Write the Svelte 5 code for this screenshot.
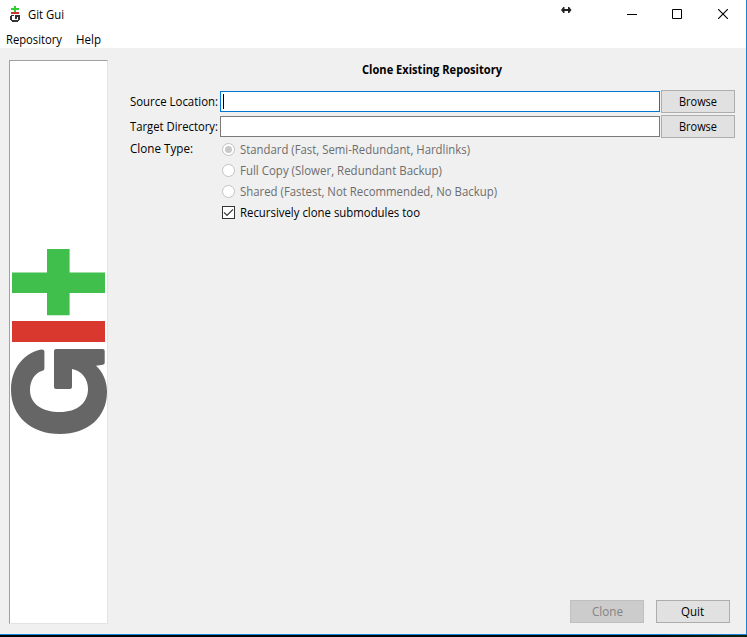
<script>
  let source = $state('');
  let target = $state('');
  let recursive = $state(true);
  const types = [
    { label: 'Standard (Fast, Semi-Redundant, Hardlinks)', on: true, width: 230 },
    { label: 'Full Copy (Slower, Redundant Backup)', on: false, width: 202 },
    { label: 'Shared (Fastest, Not Recommended, No Backup)', on: false, width: 257 }
  ];
</script>

{#snippet label(text, width, bold = false, color = '#000')}
  <svg class="label" class:bold style="width: {width}px" height="18" role="img" aria-label={text}>
    <text x="0" y="13" textLength={width} lengthAdjust="spacingAndGlyphs" fill={color}>{text}</text>
  </svg>
{/snippet}

<div class="desktop">
  <div class="window">
    <header>
      <svg class="app-icon" width="10" height="17" viewBox="0 0 10 17" shape-rendering="crispEdges">
        <path fill="#32cd32" d="M4 0h2v2h3v2H6v2H4V4H1V2h3z" />
        <path fill="#cc3333" d="M1 6h8v2H1z" />
        <path fill="#333" d="M1 9h3v1H2v4h6v-3H7v2H5V9h5v5H9v1H8v1H2v-1H1v-1H0v-4h1z" />
      </svg>
      {@render label('Git Gui', 36)}
      <div class="controls">
        <svg width="11" height="6" viewBox="0 0 11 6" class="resize">
          <path fill="#222" d="M0 3 2 .5V0h1.500v2h3.500V0h1.500v.5l2 2.500-2 2.500V6H7V4H3.500v2H2v-.5z" />
        </svg>
        <svg width="10" height="10" class="min"><path d="M0 5.5h10" stroke="#000" /></svg>
        <svg width="10" height="10" class="max"><path d="M.5.5h9v9h-9z" fill="none" stroke="#000" /></svg>
        <svg width="10" height="10" class="close"><path d="m0 0 10 10M10 0 0 10" stroke="#000" stroke-width="1.1" /></svg>
      </div>
    </header>
    <nav>
      {@render label('Repository', 56)}
      {@render label('Help', 25)}
    </nav>
    <main>
      <aside>
        <svg width="97" height="187" viewBox="10 248 97 187">
          <path fill="#40bf4d" d="M47 249h22.6v23.5H105V293H69.600v22.200H47V293H12v-20.500h35z" />
          <path fill="#d9382f" d="M12 321h93v21H12z" />
          <path
            fill="#666"
            d="M41 349.500C25 353 11 367 11 390c0 26 20 44 49 44 28 0 47-17 47-42 0-11-4-20-11-26.300l7-1q1.700-.3 1.700-2V351q0-2-2-2H56q-2 0-2 2v36q0 2 2 2h14q2 0 2-2v-18c10 2 16 10 16 20 0 14-11 23-28 23-18 0-30-8-30-22 0-10 5-17 12.500-19.300q1.900-.5 1.900-2.200V351.500q0-2.200-3.400-2z"
          />
        </svg>
      </aside>
      <section>
        <h1>{@render label('Clone Existing Repository', 140, true)}</h1>
        <form onsubmit={(e) => e.preventDefault()}>
          <div class="row">
            <div class="name">{@render label('Source Location:', 88)}</div>
            <div class="field focused">
              <span class="caret"></span>
              <input aria-label="Source Location" bind:value={source} />
            </div>
            <button type="button">{@render label('Browse', 38)}</button>
          </div>
          <div class="row">
            <div class="name">{@render label('Target Directory:', 88)}</div>
            <div class="field"><input aria-label="Target Directory" bind:value={target} /></div>
            <button type="button">{@render label('Browse', 38)}</button>
          </div>
          <div class="type">
            <div class="name">{@render label('Clone Type:', 63)}</div>
            <div class="options">
              {#each types as t}
                <div class="option">
                  <span class="radio" class:on={t.on}></span>
                  {@render label(t.label, t.width, false, '#6d6d6d')}
                </div>
              {/each}
              <div class="option">
                <button type="button" class="check" aria-label="Recursive" onclick={() => (recursive = !recursive)}>
                  {#if recursive}
                    <svg width="11" height="11"><path d="M1 5.300 4 8.300 10 2.300" fill="none" stroke="#333" stroke-width="1.200" /></svg>
                  {/if}
                </button>
                {@render label('Recursively clone submodules too', 180)}
              </div>
            </div>
          </div>
        </form>
        <footer>
          <button type="button" class="disabled" disabled>{@render label('Clone', 31, false, '#838383')}</button>
          <button type="button" class="quit">{@render label('Quit', 23)}</button>
        </footer>
      </section>
    </main>
  </div>
</div>

<style>
  :global(body) { margin: 0; overflow: hidden; }
  .desktop {
    box-sizing: border-box;
    width: 747px;
    height: 637px;
    padding-bottom: 2px;
    background: linear-gradient(90deg, #030608 88%, #10240c);
    font: 12px 'Open Sans', 'Noto Sans', sans-serif;
  }
  .window {
    box-sizing: border-box;
    height: 635px;
    border-right: 1px solid #1883d7;
    border-bottom: 1px solid #1883d7;
    background: #fff;
    display: flex;
    flex-direction: column;
  }
  svg { display: block; flex: none; }
  .label { overflow: visible; }
  .bold { font-weight: 700; }
  header { height: 30px; display: flex; align-items: flex-start; padding-left: 10px; }
  .app-icon { margin: 6px 8px 0 0; }
  header .label { margin-top: 6px; }
  .controls { display: flex; margin-left: auto; padding-right: 18px; }
  .resize { margin: 7px 55px 0 0; }
  .min { margin: 9px 35px 0 0; }
  .max { margin: 9px 36px 0 0; }
  .close { margin-top: 9px; }
  nav { height: 18px; padding-left: 6px; display: flex; gap: 14px; }
  nav .label { margin-top: 1px; }
  main { flex: 1; display: flex; background: #f0f0f0; padding: 12px 11px 10px 9px; }
  aside {
    box-sizing: border-box;
    width: 99px;
    height: 564px;
    border: 1px solid;
    border-color: #a0a0a0 #e3e3e3 #e3e3e3 #a0a0a0;
    background: #fff;
    display: flex;
    align-items: center;
    padding-bottom: 1px;
  }
  section { flex: 1; display: flex; flex-direction: column; padding-left: 22px; }
  h1 { margin: 0; height: 30px; display: flex; justify-content: center; font: inherit; padding-right: 1px; }
  h1 .label { margin-top: 1px; }
  form { flex: 1; }
  .row { display: flex; align-items: center; height: 23px; margin-bottom: 2px; }
  .name { width: 90px; flex: none; }
  .field {
    box-sizing: border-box;
    flex: 1;
    height: 21px;
    border: 1px solid #7a7a7a;
    background: #fff;
    display: flex;
    align-items: center;
    margin-right: 1px;
  }
  .focused { border-color: #0078d7; }
  .caret { width: 1px; height: 15px; background: #000; margin-left: 2px; }
  input { flex: 1; min-width: 0; height: 17px; border: 0; padding: 0 2px; outline: 0; background: none; font: inherit; }
  button {
    box-sizing: border-box;
    width: 74px;
    height: 23px;
    padding: 0;
    border: 1px solid #adadad;
    background: #e1e1e1;
    display: flex;
    align-items: center;
    justify-content: center;
    font: inherit;
  }
  .disabled { background: #ccc; border-color: #bfbfbf; }
  .quit { padding-right: 2px; }
  .type { display: flex; align-items: flex-start; }
  .options { padding-left: 2px; margin-top: -1px; }
  .option { height: 21px; display: flex; align-items: center; gap: 5px; }
  .radio {
    box-sizing: border-box;
    width: 13px;
    height: 13px;
    border: 1px solid #c3c3c3;
    border-radius: 50%;
    background: #fff;
    display: grid;
    place-items: center;
  }
  .radio.on::after { content: ''; width: 7px; height: 7px; border-radius: 50%; background: #c8c8c8; }
  .check { width: 13px; height: 13px; border-color: #333; background: #fff; }
  footer { display: flex; justify-content: flex-end; gap: 12px; padding-right: 5px; height: 24px; }
</style>
